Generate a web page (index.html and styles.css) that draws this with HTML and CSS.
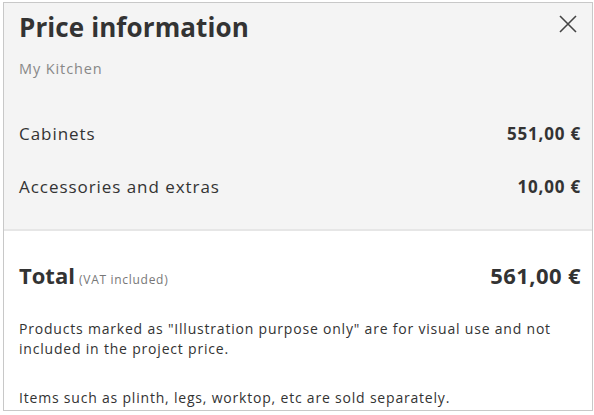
FILE: index.html
```html
<!DOCTYPE html>
<html lang="en">
<head>
<meta charset="utf-8">
<title>Price information</title>
<link rel="stylesheet" href="styles.css">
</head>
<body>
<div class="modal">
  <div class="top">
    <div class="head">
      <h1 class="title">Price information</h1>
      <button class="close" aria-label="Close">
        <svg width="18" height="18" viewBox="0 0 18 18"><path d="M1 1L17 17M17 1L1 17" stroke="#444" stroke-width="1.6" fill="none"/></svg>
      </button>
    </div>
    <div class="sub">My Kitchen</div>
    <div class="rows">
      <div class="row"><span class="label">Cabinets</span><span class="amount">551,00 €</span></div>
      <div class="row"><span class="label">Accessories and extras</span><span class="amount">10,00 €</span></div>
    </div>
  </div>
  <div class="bottom">
    <div class="total">
      <div><span class="total-label">Total</span> <span class="vat">(VAT included)</span></div>
      <span class="total-amount">561,00 €</span>
    </div>
    <p class="note">Products marked as "Illustration purpose only" are for visual use and not included in the project price.</p>
    <p class="note note-last">Items such as plinth, legs, worktop, etc are sold separately.</p>
  </div>
</div>
</body>
</html>
```
FILE: styles.css
```css
* { box-sizing: border-box; }
html, body { margin: 0; padding: 0; background: #fff; }
body {
  padding: 2px 2px 0 3px;
  font-family: "Open Sans", "Liberation Sans", sans-serif;
  color: #333;
}
.modal {
  width: 590px;
  height: 409px;
  border: 1px solid #c8c8c8;
  overflow: hidden;
}
.top {
  background: #f4f4f4;
  padding: 0 11px 0 15px;
  height: 228px;
  border-bottom: 2px solid #e6e6e6;
}
.head {
  display: flex;
  justify-content: space-between;
  align-items: flex-start;
}
.title {
  margin: 0;
  padding-top: 6px;
  font-size: 26px;
  font-weight: 700;
  line-height: 36px;
  letter-spacing: 0.1px;
  color: #333;
}
.close {
  border: 0;
  background: none;
  padding: 0;
  margin-top: 12px;
  margin-right: 4px;
  width: 18px;
  height: 18px;
  display: block;
}
.close svg { display: block; }
.sub {
  margin-top: 14px;
  font-size: 14.5px;
  line-height: 20px;
  letter-spacing: 0.9px;
  color: #888;
}
.rows { margin-top: 43px; }
.row {
  display: flex;
  justify-content: space-between;
  align-items: baseline;
  height: 53px;
  font-size: 17px;
  line-height: 24px;
  letter-spacing: 0.95px;
}
.amount { font-weight: 700; letter-spacing: 0.8px; }
.bottom {
  padding: 29px 11px 0 15px;
}
.total {
  display: flex;
  justify-content: space-between;
  align-items: baseline;
  line-height: 30px;
}
.total-label { font-size: 22px; font-weight: 700; }
.vat { font-size: 12px; color: #777; letter-spacing: 0.7px; }
.total-amount { font-size: 22px; font-weight: 700; letter-spacing: 0.4px; }
.note {
  margin: 24px 0 0;
  font-size: 14px;
  line-height: 20px;
  letter-spacing: 0.8px;
  color: #333;
}
.note-last { margin-top: 29px; }
```
